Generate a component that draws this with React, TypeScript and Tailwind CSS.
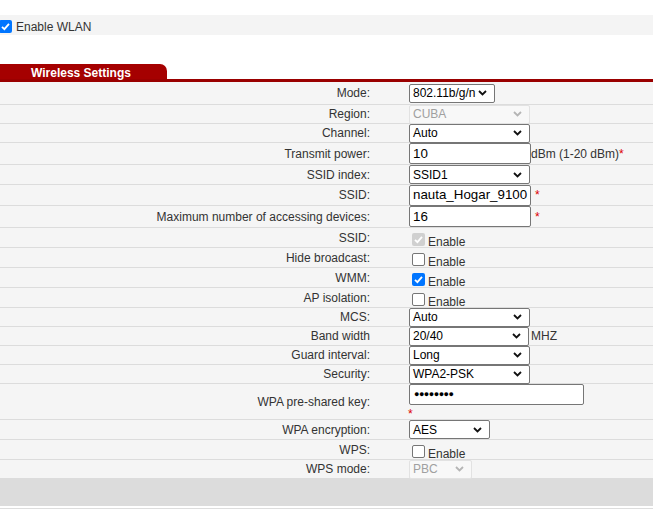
import React from "react";

const Chevron = ({ disabled }: { disabled?: boolean }) => (
  <svg width="9" height="6" viewBox="0 0 9 6" className="shrink-0">
    <path d="M1 1 L4.5 4.5 L8 1" fill="none" stroke={disabled ? "#b5b5b5" : "#111"} strokeWidth="1.8" />
  </svg>
);

const Select = ({ value, w, disabled }: { value: string; w: string; disabled?: boolean }) => (
  <div
    className={`${w} h-[19px] flex items-center justify-between pl-[3px] pr-[7px] rounded-[2px] border text-[12px] leading-none ${
      disabled ? "border-[#e2e2e2] bg-[#f8f8f8] text-[#a0a0a0]" : "border-[#767676] bg-white text-black"
    }`}
  >
    <span>{value}</span>
    <Chevron disabled={disabled} />
  </div>
);

const Input = ({ value, w }: { value: string; w: string }) => (
  <div className={`${w} h-[21px] flex items-center pl-[3px] rounded-[2px] border border-[#767676] bg-white text-[13.33px] leading-none text-black`}>
    {value}
  </div>
);

const Check = ({ state }: { state: "on" | "off" | "dis" }) => {
  if (state === "off")
    return <div className="w-[13px] h-[13px] rounded-[2px] border border-[#767676] bg-white shrink-0" />;
  return (
    <div
      className={`w-[13px] h-[13px] rounded-[2px] flex items-center justify-center shrink-0 ${
        state === "on" ? "bg-[#0075ff]" : "bg-[#d0d0d0]"
      }`}
    >
      <svg width="11" height="11" viewBox="0 0 11 11">
        <path d="M2 5.8 L4.4 8.2 L9 2.8" fill="none" stroke="white" strokeWidth="1.8" />
      </svg>
    </div>
  );
};

const Star = () => <span className="text-[#d00] text-[12px]">*</span>;

const EnableCheck = ({ state }: { state: "on" | "off" | "dis" }) => (
  <div className="flex items-end gap-[3px] pl-[3px] pt-[4px]">
    <Check state={state} />
    <span className="text-[12px] leading-none text-[#333] translate-y-[2px]">Enable</span>
  </div>
);

type Row = { label: string; h: string; control: React.ReactNode };

const rows: Row[] = [
  { label: "Mode:", h: "h-[23px]", control: <Select value="802.11b/g/n" w="w-[86px]" /> },
  { label: "Region:", h: "h-[19px]", control: <Select value="CUBA" w="w-[121px]" disabled /> },
  { label: "Channel:", h: "h-[19px]", control: <Select value="Auto" w="w-[121px]" /> },
  {
    label: "Transmit power:",
    h: "h-[22px]",
    control: (
      <div className="flex items-center">
        <Input value="10" w="w-[122px]" />
        <span className="text-[12px] text-[#333]">dBm (1-20 dBm)</span>
        <Star />
      </div>
    ),
  },
  { label: "SSID index:", h: "h-[20px]", control: <Select value="SSID1" w="w-[121px]" /> },
  {
    label: "SSID:",
    h: "h-[21px]",
    control: (
      <div className="flex items-center gap-[4px]">
        <Input value="nauta_Hogar_9100" w="w-[122px]" />
        <Star />
      </div>
    ),
  },
  {
    label: "Maximum number of accessing devices:",
    h: "h-[22px]",
    control: (
      <div className="flex items-center gap-[4px]">
        <Input value="16" w="w-[122px]" />
        <Star />
      </div>
    ),
  },
  { label: "SSID:", h: "h-[20px]", control: <EnableCheck state="dis" /> },
  { label: "Hide broadcast:", h: "h-[20px]", control: <EnableCheck state="off" /> },
  { label: "WMM:", h: "h-[20px]", control: <EnableCheck state="on" /> },
  { label: "AP isolation:", h: "h-[20px]", control: <EnableCheck state="off" /> },
  { label: "MCS:", h: "h-[19px]", control: <Select value="Auto" w="w-[121px]" /> },
  {
    label: "Band width",
    h: "h-[19px]",
    control: (
      <div className="flex items-center">
        <Select value="20/40" w="w-[120px]" />
        <span className="text-[12px] text-[#333] ml-[2px]">MHZ</span>
      </div>
    ),
  },
  { label: "Guard interval:", h: "h-[19px]", control: <Select value="Long" w="w-[121px]" /> },
  { label: "Security:", h: "h-[19px]", control: <Select value="WPA2-PSK" w="w-[121px]" /> },
  {
    label: "WPA pre-shared key:",
    h: "h-[36px]",
    control: (
      <div className="flex flex-col items-start">
        <div className="w-[175px] h-[21px] flex items-center pl-[4px] rounded-[2px] border border-[#767676] bg-white">
          <span className="text-[9px] tracking-[-0.5px] text-black leading-none">●●●●●●●●</span>
        </div>
        <span className="text-[#d00] text-[12px] leading-none mt-[3px] -ml-[1px]">*</span>
      </div>
    ),
  },
  { label: "WPA encryption:", h: "h-[20px]", control: <Select value="AES" w="w-[81px]" /> },
  { label: "WPS:", h: "h-[20px]", control: <EnableCheck state="off" /> },
  { label: "WPS mode:", h: "h-[18px]", control: <Select value="PBC" w="w-[63px]" disabled /> },
];

export default function App() {
  return (
    <div className="w-[653px] h-[528px] bg-white font-['Liberation_Sans',Arial,sans-serif] text-[12px] text-[#333] overflow-hidden">
      <div className="h-[15px]" />
      <div className="h-[20px] bg-[#f4f4f4] flex items-center gap-[4px]">
        <div className="-ml-[1px] translate-y-[1px]">
          <Check state="on" />
        </div>
        <span className="leading-none translate-y-[2px]">Enable WLAN</span>
      </div>
      <div className="h-[29px]" />
      <div className="h-[15px] w-[167px] bg-[#a50000] rounded-tr-[7px] flex items-center pl-[31px]">
        <span className="text-white font-bold text-[12px] leading-none translate-y-[1px]">Wireless Settings</span>
      </div>
      <div className="h-[3px] bg-[#9a0000]" />
      <div className="bg-[#f5f5f5]">
        {rows.map((r, i) => (
          <div
            key={i}
            className={`${r.h} flex items-center ${i < rows.length - 1 ? "border-b border-[#dcdcdc]" : ""}`}
          >
            <div className="w-[371px] text-right pr-[1px] leading-none">{r.label}</div>
            <div className="pl-[38px] flex items-center">{r.control}</div>
          </div>
        ))}
      </div>
      <div className="h-[28px] bg-[#dcdcdc]" />
      <div className="h-[2px]" />
      <div className="h-[1px] bg-[#dddddd]" />
    </div>
  );
}
